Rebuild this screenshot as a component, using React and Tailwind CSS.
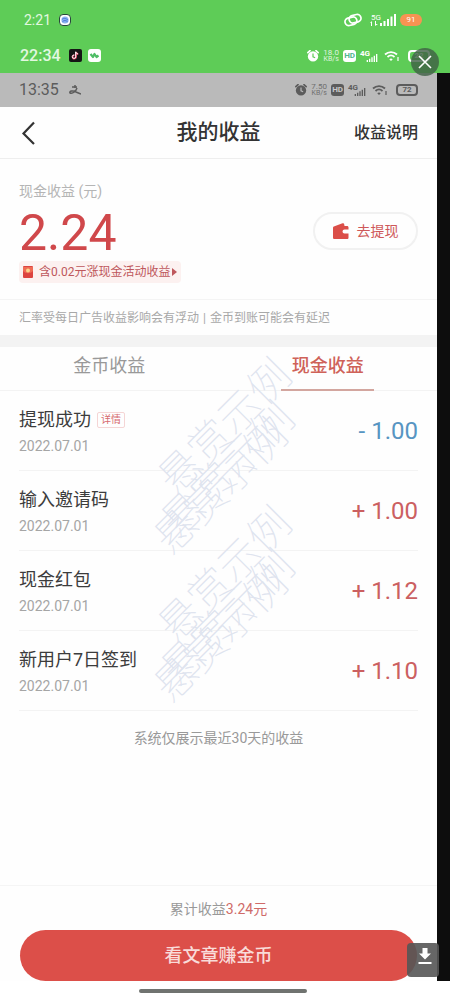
const records = [
  { title: '提现成功', date: '2022.07.01', amount: '- 1.00', detail: true },
  { title: '输入邀请码', date: '2022.07.01', amount: '+ 1.00' },
  { title: '现金红包', date: '2022.07.01', amount: '+ 1.12' },
  { title: '新用户7日签到', date: '2022.07.01', amount: '+ 1.10' },
];

function Signal({ className }) {
  return (
    <svg viewBox="0 0 16 12" className={className} fill="currentColor">
      <path d="M0 9h2v3H0zM3.5 7h2v5h-2zM7 5h2v7H7zM10.5 2.500h2V12h-2zM14 0h2v12h-2z" />
    </svg>
  );
}

function Alarm({ hands }) {
  return (
    <svg viewBox="0 0 14 14" className="size-3">
      <circle cx="7" cy="7.500" r="6" fill="currentColor" />
      <path d="M1 3 3.500 .8M13 3 10.500 .8" stroke="currentColor" strokeWidth="2" strokeLinecap="round" />
      <path d="M7 4v4l2.500 1" stroke={hands} strokeWidth="1.400" fill="none" />
    </svg>
  );
}

function Wifi() {
  return (
    <svg viewBox="0 0 16 12" className="h-3 w-4" fill="none" stroke="currentColor" strokeWidth="1.800">
      <path d="M1 4.500c3.500-3.300 8.500-3.300 12 0M3.500 7c2.200-2 4.800-2 7 0" />
      <path d="M5.300 9.200c1-.9 2.400-.9 3.400 0L7 11z" fill="currentColor" stroke="none" />
      <path d="M14 7v4" strokeWidth="1.200" />
    </svg>
  );
}

function StatusIcons({ speed, battery, hands, hdClass }) {
  return (
    <div className="flex items-center gap-1">
      <Alarm hands={hands} />
      <div className="w-4 text-center text-[8px] leading-[7px] opacity-80">
        <div>{speed}</div>
        <div className="text-[7px]">KB/s</div>
      </div>
      <span className={`rounded-[3px] px-px text-[8px] font-bold leading-3 ${hdClass}`}>HD</span>
      <div className="flex w-5 items-end">
        <span className="-mr-1.5 self-start text-[8px] font-bold leading-2">4G</span>
        <Signal className="mt-1 h-2 w-4 shrink-0" />
      </div>
      <Wifi />
      <span className="ml-1 w-[22px] rounded-sm border-2 border-current text-center text-[8px] font-bold leading-2">{battery}</span>
    </div>
  );
}

function StatusBars() {
  return (
    <div className="h-[73px] bg-[#5ecc57] text-white">
      <div className="flex h-10 items-center justify-between pl-6 pr-7">
        <div className="flex items-center gap-2">
          <span className="text-sm text-[#e2f8e0]">2:21</span>
          <svg viewBox="0 0 12 12" className="size-3">
            <rect x=".5" y=".5" width="11" height="11" rx="3.500" fill="#fff" stroke="#27483a" />
            <circle cx="6" cy="6" r="3.600" fill="#8bb3f0" />
            <path d="M3 5.500c2-2 4-1 6 .5M3.500 7.500c2-1.500 3-1 5 0" stroke="#4b79d8" fill="none" />
          </svg>
        </div>
        <div className="flex items-center gap-1">
          <svg viewBox="0 0 18 14" className="mr-1 h-3.5 w-[18px]" fill="none" stroke="currentColor" strokeWidth="1.700">
            <rect x="1" y="4.500" width="12" height="7.500" rx="3.700" transform="rotate(-14 7 8.500)" />
            <rect x="5" y="2" width="12" height="7.500" rx="3.700" transform="rotate(-14 11 5.500)" />
          </svg>
          <div className="flex w-[26px] items-end">
            <div className="w-2.5 shrink-0 text-[8px] leading-[7px]">
              <div className="pl-px">5G</div>
              <svg viewBox="0 0 8 5" className="h-[5px] w-2" fill="currentColor">
                <path d="M0 2 2 0v5H1V2zM5 0h1v3h2L5 5z" />
              </svg>
            </div>
            <Signal className="h-3 w-4 shrink-0" />
          </div>
          <span className="w-[22px] rounded-full bg-[#f79352] text-center text-[8px] leading-3">91</span>
        </div>
      </div>
      <div className="flex h-[33px] items-center justify-between pb-0.5 pl-5 pr-5">
        <div className="flex items-center gap-2">
          <span className="text-base font-medium text-[#e2f8e0]">22:34</span>
          <svg viewBox="0 0 13 13" className="size-[13px]">
            <rect width="13" height="13" rx="2" fill="#151515" />
            <path d="M7 3v5a1.700 1.700 0 1 1-1.500-1.700M7 3c.2 1.300 1 2 2.300 2" fill="none" stroke="#e34364" strokeWidth="1.800" />
            <path d="M6.700 2.800v5A1.700 1.700 0 1 1 5.200 6M6.700 2.800C7 4.200 7.800 4.700 9 4.800" fill="none" stroke="#fff" />
          </svg>
          <svg viewBox="0 0 13 13" className="-ml-0.5 size-[13px]">
            <rect width="13" height="13" rx="3" fill="#fff" />
            <path d="m2.500 5 2.500 3 1.500-3 2 3 2-1.500" fill="none" stroke="#4fbd66" strokeWidth="2.200" strokeLinejoin="round" />
          </svg>
        </div>
        <StatusIcons speed="18.0" battery="22" hands="#5ecc57" hdClass="bg-white text-[#4fb78e]" />
      </div>
    </div>
  );
}

function Watermark() {
  const line = 'absolute left-0 top-0 whitespace-nowrap text-[42px] font-thin leading-none -rotate-45 text-[#dfe4ef]';
  return (
    <div aria-hidden="true" className="relative h-[148px] w-[168px]">
      <span className={line}>悬赏示例</span>
      <span className={`${line} translate-x-[3px] translate-y-[43px]`}>悬赏示例</span>
      <span className={`${line} -translate-x-[4px] translate-y-[60px]`}>悬赏示例</span>
    </div>
  );
}

function RecordRow({ title, date, amount, detail }) {
  const color = amount.startsWith('-') ? 'text-[#5795c2]' : 'text-[#cb6061]';
  return (
    <li className="mx-[19px] flex h-20 items-center justify-between border-b border-[#f3f3f3]">
      <div className="pt-1">
        <div className="flex items-center gap-1.5">
          <h3 className="text-lg leading-6 text-[#3c3c3c]">{title}</h3>
          {detail && (
            <button className="rounded-xs border border-[#f5d5d5] px-[3px] text-[10px] leading-3.5 text-[#d66a70]">详情</button>
          )}
        </div>
        <p className="mt-0.5 text-sm leading-6 text-[#a5a5a5]">{date}</p>
      </div>
      <span className={`text-2xl ${color}`}>{amount}</span>
    </li>
  );
}

export default function App() {
  return (
    <div className="relative flex min-h-screen flex-col bg-white font-[Roboto,'Noto_Sans_CJK_SC',sans-serif]">
      <StatusBars />
      <div className="flex flex-1 bg-[#0d0d0d]">
        <main className="flex min-w-0 flex-1 flex-col bg-[#fefefe]">
          <div className="flex h-[34px] items-center justify-between bg-[#bababa] pl-[19px] pr-[19px] text-[#5c5c5c]">
            <div className="flex items-center gap-2.5">
              <span className="text-base">13:35</span>
              <svg viewBox="0 0 12 10" className="h-2.5 w-3" fill="none" stroke="currentColor" strokeWidth="1.500">
                <path d="M3 2h5M6 0v3M8 3C7 6 4 9 1 8c-1-2 3-3 6-1l5 2" />
              </svg>
            </div>
            <StatusIcons speed="7.50" battery="72" hands="#bababa" hdClass="bg-[#5c5c5c] text-[#c8c8c8]" />
          </div>

          <header className="grid h-[52px] grid-cols-3 items-center border-b border-[#eee] px-[19px] text-[#333]">
            <button aria-label="返回" className="justify-self-start">
              <svg viewBox="0 0 20 24" className="h-6 w-5" fill="none" stroke="currentColor" strokeWidth="2.200">
                <path d="M15 1.500 4.500 12.500 15 23" />
              </svg>
            </button>
            <h1 className="text-center text-[21px] font-medium">我的收益</h1>
            <a href="#rules" className="justify-self-end text-base font-medium">收益说明</a>
          </header>

          <section className="flex h-[141px] items-center justify-between border-b border-[#f4f4f4] px-[19px] pt-1">
            <div className="pt-0.5">
              <h2 className="text-sm leading-5 text-[#b5b5b5]">现金收益 (元)</h2>
              <p className="mt-1 text-[50px] leading-[56px] text-[#d0484b]">2.24</p>
              <a href="#bonus" className="flex h-[22px] items-center gap-1.5 rounded-sm bg-[#fcf1f0] px-1 text-xs text-[#be575c]">
                <svg viewBox="0 0 10 12" className="h-3 w-2.5">
                  <rect width="10" height="12" rx="1" fill="#dc4440" />
                  <path d="M0 1h10v4c-3 3-7 3-10 0z" fill="#ef6b54" />
                  <circle cx="5" cy="4.500" r="2" fill="#fbd48a" />
                </svg>
                <span>含0.02元涨现金活动收益</span>
                <svg viewBox="0 0 5 8" className="-ml-1 h-2 w-[5px]" fill="currentColor">
                  <path d="m0 0 5 4-5 4z" />
                </svg>
              </a>
            </div>
            <button className="flex h-[38px] w-[105px] items-center justify-center gap-2 rounded-full border-2 border-[#f1f1f1] text-sm text-[#ce5859]">
              <svg viewBox="0 0 16 16" className="size-4" fill="#db4f49">
                <path d="M0 5c0-1 .5-1.700 1.500-1.700L9.500.3c1-.3 1.500 0 1.700 1l.3 1.700H14c1 0 1.500.6 1.500 1.500V6.500h-4a2 2 0 0 0 0 4h4v4c0 1-.5 1.500-1.500 1.500H1.500C.5 16 0 15.500 0 14.500z" />
              </svg>
              去提现
            </button>
          </section>

          <p className="flex h-[35px] items-center whitespace-nowrap px-[19px] text-xs text-[#a8a8a8]">
            汇率受每日广告收益影响会有浮动<span className="mx-1">|</span>金币到账可能会有延迟
          </p>
          <div className="h-3 bg-[#f3f3f3]" />

          <nav className="grid h-[44px] grid-cols-2 border-b border-[#f3f3f3] text-lg">
            <button className="pb-1.5 text-[#999]">金币收益</button>
            <button className="relative pb-1.5 font-medium text-[#cf6259]">
              现金收益
              <span className="absolute inset-x-0 -bottom-px mx-auto h-0.5 w-[93px] bg-[#d3a69f]" />
            </button>
          </nav>

          <ul>
            {records.map((item) => (
              <RecordRow key={item.title} {...item} />
            ))}
          </ul>
          <p className="mt-[17px] text-center text-sm text-[#999]">系统仅展示最近30天的收益</p>

          <footer className="mt-auto border-t border-[#f5f5f5] px-5 pt-[13px]">
            <p className="text-center text-sm text-[#999]">
              累计收益<span className="text-[#cf6a68]">3.24元</span>
            </p>
            <button className="mt-[11px] h-[51px] w-full rounded-full bg-[#dc4f49] text-lg font-medium text-[#f9dcd9]">看文章赚金币</button>
          </footer>
        </main>
        <div className="w-[13px]" />
      </div>
      <div className="flex h-[19px] items-center justify-center">
        <div className="mr-1 h-1 w-[168px] rounded-full bg-[#707370]" />
      </div>

      {/* overlays */}
      <div className="pointer-events-none absolute inset-x-0 top-[406px] flex flex-col items-center">
        <Watermark />
        <Watermark />
      </div>
      <button aria-label="关闭" className="absolute right-[11px] top-12 grid size-7 place-items-center rounded-full bg-[#3f5f45]/80 text-white">
        <svg viewBox="0 0 14 14" className="size-3.5" stroke="currentColor" strokeWidth="1.600">
          <path d="m1 1 12 12M13 1 1 13" />
        </svg>
      </button>
      <button aria-label="下载" className="absolute bottom-[23px] right-[11px] grid h-[34px] w-8 place-items-center rounded-sm bg-[#555]/90 pl-1 text-white">
        <svg viewBox="0 0 14 16" className="-mt-2 h-4 w-3.5" fill="currentColor">
          <path d="M4.500 0h5v5.500H13l-6 6-6-6h3.500zM.5 14h13v2H.5z" />
        </svg>
      </button>
    </div>
  );
}
